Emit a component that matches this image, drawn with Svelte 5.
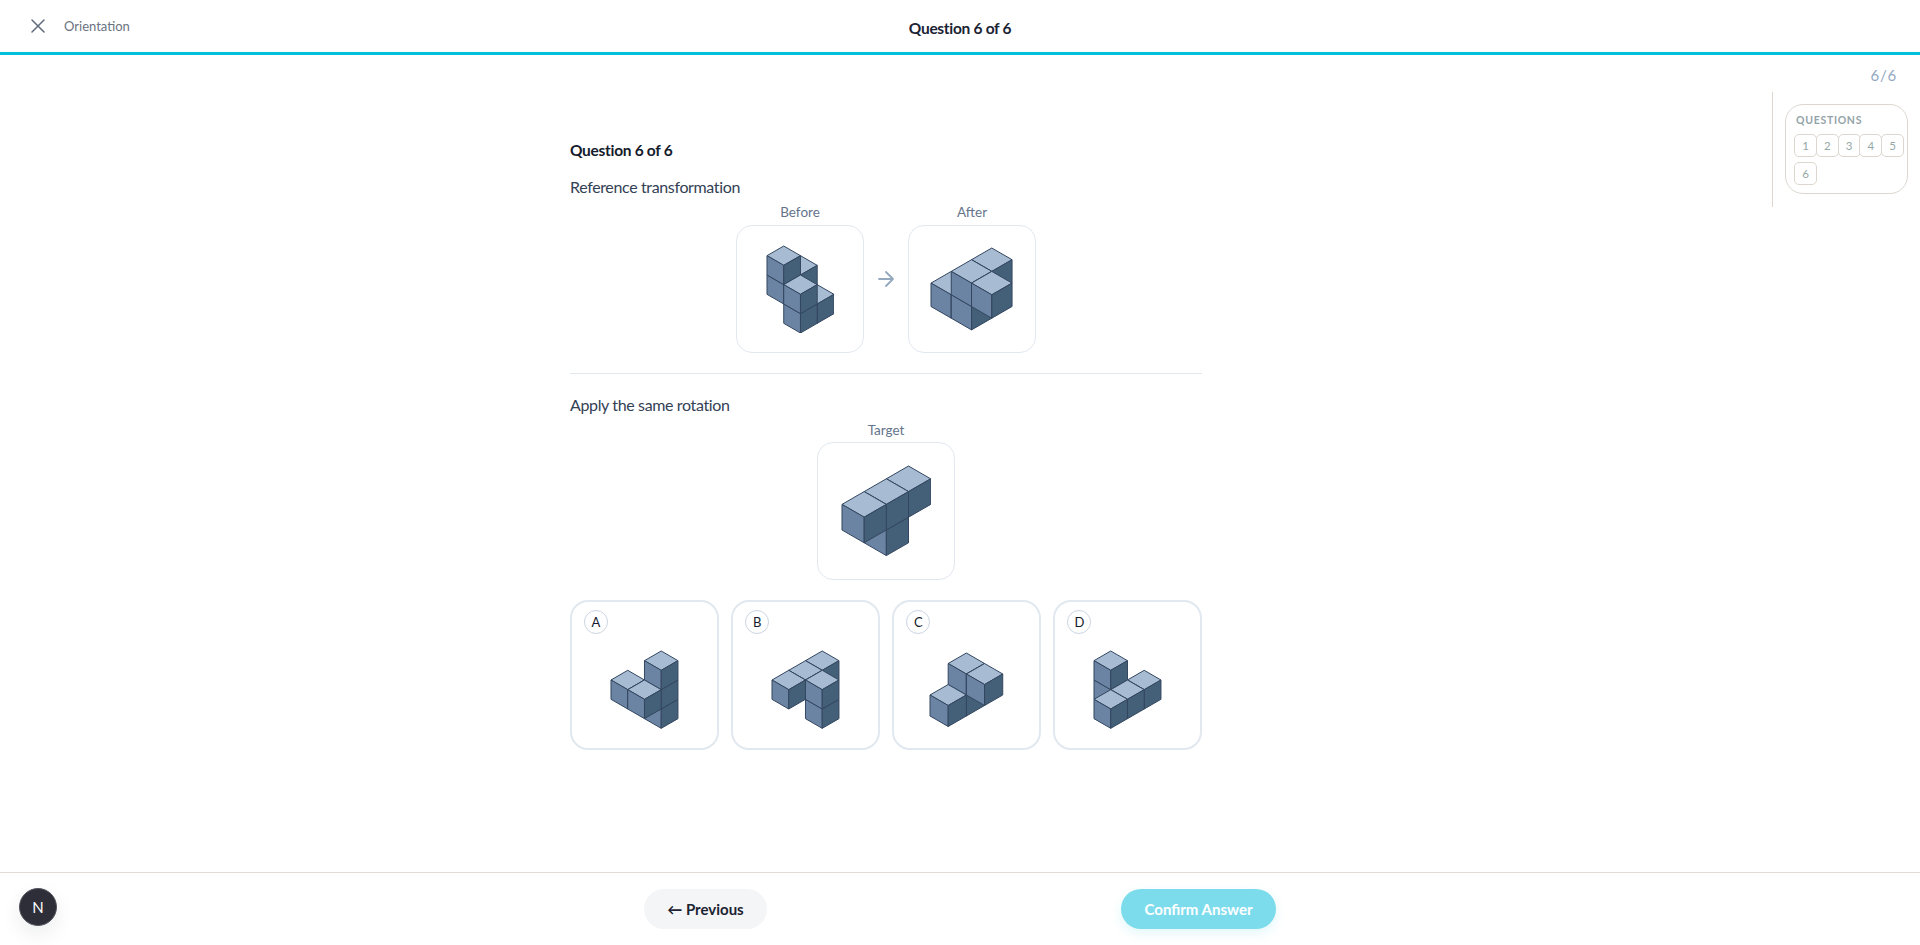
<script>
  function build(vox, s) {
    const dx = s * 0.866, dy = s * 0.5;
    const P = (a, b, c) => [(a - b) * dx, (a + b) * dy - c * s];
    const sorted = [...vox].sort((p, q) => p[0] + p[1] + p[2] - (q[0] + q[1] + q[2]));
    const faces = [];
    for (const [a, b, c] of sorted) {
      faces.push({ k: 'top', pts: [P(a, b, c + 1), P(a + 1, b, c + 1), P(a + 1, b + 1, c + 1), P(a, b + 1, c + 1)] });
      faces.push({ k: 'left', pts: [P(a, b + 1, c + 1), P(a + 1, b + 1, c + 1), P(a + 1, b + 1, c), P(a, b + 1, c)] });
      faces.push({ k: 'right', pts: [P(a + 1, b, c + 1), P(a + 1, b + 1, c + 1), P(a + 1, b + 1, c), P(a + 1, b, c)] });
    }
    const all = faces.flatMap((f) => f.pts);
    const minX = Math.min(...all.map((p) => p[0])), maxX = Math.max(...all.map((p) => p[0]));
    const minY = Math.min(...all.map((p) => p[1])), maxY = Math.max(...all.map((p) => p[1]));
    const w = maxX - minX + 2, h = maxY - minY + 2;
    return {
      w, h,
      vb: `${minX - 1} ${minY - 1} ${w} ${h}`,
      faces: faces.map((f) => ({ k: f.k, d: f.pts.map((p) => p.map((n) => n.toFixed(2)).join(',')).join(' ') }))
    };
  }

  const before = build([[0,0,0],[0,0,-1],[0,-1,-1],[1,0,-1],[1,0,-2],[1,-1,-2]], 19.33);
  const after = build([[0,0,0],[0,-1,0],[1,0,0],[-1,0,-1],[0,0,-1]], 23.4);
  const target = build([[0,0,0],[0,-1,0],[0,-2,0],[0,-1,-1]], 25.6);
  const options = [
    { id: 'A', fig: build([[0,0,0],[0,0,-1],[0,0,-2],[0,1,-1],[-1,1,-1]], 19.33) },
    { id: 'B', fig: build([[0,0,0],[0,1,0],[0,2,0],[1,1,0],[1,1,-1]], 19.33) },
    { id: 'C', fig: build([[0,0,0],[1,0,0],[0,1,-1],[0,0,-1]], 21) },
    { id: 'D', fig: build([[0,0,0],[0,0,-1],[1,-1,-1],[1,0,-1],[1,1,-1]], 19.33) }
  ];
  const nums = [1, 2, 3, 4, 5, 6];
</script>

{#snippet cube(fig)}
  <svg width={fig.w} height={fig.h} viewBox={fig.vb} class="cube">
    {#each fig.faces as f}
      <polygon points={f.d} class={f.k} />
    {/each}
  </svg>
{/snippet}

<div class="page">
  <header class="top">
    <div class="left">
      <svg class="x" width="24" height="24" viewBox="0 0 24 24" fill="none" stroke="currentColor" stroke-width="1.5" stroke-linecap="round"><path d="M18 6 6 18M6 6l12 12" /></svg>
      <span class="crumb">Orientation</span>
    </div>
    <div class="title">Question 6 of 6</div>
    <div></div>
  </header>

  <div class="middle">
    <main class="center">
      <div class="column">
        <h1>Question 6 of 6</h1>
        <h2>Reference transformation</h2>
        <div class="pair">
          <div class="fig">
            <span class="label">Before</span>
            <div class="box small">{@render cube(before)}</div>
          </div>
          <svg class="arrow" width="24" height="24" viewBox="0 0 24 24" fill="none" stroke="currentColor" stroke-width="1.8" stroke-linecap="round" stroke-linejoin="round"><path d="M5 12h14M12 5l7 7-7 7" /></svg>
          <div class="fig">
            <span class="label">After</span>
            <div class="box small">{@render cube(after)}</div>
          </div>
        </div>
        <hr />
        <h2 class="apply">Apply the same rotation</h2>
        <div class="fig solo">
          <span class="label">Target</span>
          <div class="box large">{@render cube(target)}</div>
        </div>
        <div class="options">
          {#each options as o}
            <button class="option">
              <span class="badge">{o.id}</span>
              {@render cube(o.fig)}
            </button>
          {/each}
        </div>
      </div>
    </main>
    <aside class="side">
      <div class="count">6/6</div>
      <div class="rail">
        <div class="card">
          <div class="qhead">QUESTIONS</div>
          <div class="grid">
            {#each nums as n}
              <button class="num">{n}</button>
            {/each}
          </div>
        </div>
      </div>
    </aside>
  </div>

  <footer class="bottom">
    <div class="actions">
      <button class="prev">← Previous</button>
      <button class="confirm">Confirm Answer</button>
    </div>
  </footer>
  <div class="dev">N</div>
</div>

<style>
  :global(body) { margin: 0; background: #fff; }
  .page {
    position: relative;
    height: 945px;
    display: flex;
    flex-direction: column;
    font-family: Lato, "Noto Sans", sans-serif;
    color: #1b2333;
    overflow: hidden;
  }
  .top {
    height: 52px;
    border-bottom: 3px solid #00c1d9;
    display: grid;
    grid-template-columns: 1fr auto 1fr;
    align-items: center;
    padding: 0 26px;
  }
  .left { display: flex; align-items: center; gap: 14px; }
  .x { color: #5f6b7d; display: block; }
  .crumb { font-size: 13px; color: #6b7280; }
  .title { font-size: 15.5px; font-weight: 700; letter-spacing: -0.3px; padding-top: 4px; color: #1b2333; }
  .middle { flex: 1; display: flex; min-height: 0; }
  .center { flex: 1; display: flex; justify-content: center; }
  .column { width: 632px; padding-top: 85px; display: flex; flex-direction: column; }
  h1 { margin: 0; font-size: 15.5px; line-height: 20px; font-weight: 700; letter-spacing: -0.3px; color: #141b2b; }
  h2 { margin: 16px 0 0; font-size: 16px; line-height: 22px; font-weight: 400; letter-spacing: -0.36px; color: #334155; }
  h2.apply { margin-top: 20px; }
  .pair { margin-top: 5px; display: flex; justify-content: center; align-items: center; gap: 10px; }
  .arrow { color: #94a8bf; display: block; margin-top: 2px; }
  .fig { display: flex; flex-direction: column; align-items: center; gap: 4px; }
  .fig.solo { margin-top: 5px; gap: 3px; }
  .label { font-size: 13.5px; line-height: 18px; color: #64748b; }
  .box {
    border: 1px solid #e2e8f0;
    border-radius: 16px;
    display: flex;
    align-items: center;
    justify-content: center;
    box-sizing: border-box;
  }
  .small { width: 128px; height: 128px; }
  .large { width: 138px; height: 138px; }
  hr { margin: 20px 0 0; border: 0; border-top: 1px solid #e2e8f0; width: 100%; }
  .options { margin-top: 20px; display: grid; grid-template-columns: repeat(4, 1fr); gap: 12.5px; }
  .option {
    position: relative;
    height: 150px;
    box-sizing: border-box;
    padding: 30px 0 0;
    background: #fff;
    border: 2px solid #e2e8f0;
    border-radius: 18px;
    display: flex;
    align-items: center;
    justify-content: center;
    font: inherit;
  }
  .badge {
    position: absolute;
    left: 12px;
    top: 8px;
    width: 24px;
    height: 24px;
    box-sizing: border-box;
    border: 1px solid #cbd5e1;
    border-radius: 50%;
    display: flex;
    align-items: center;
    justify-content: center;
    font-size: 13px;
    color: #141b2b;
  }
  .cube { display: block; }
  .cube polygon { stroke: #33465f; stroke-width: 1; stroke-linejoin: round; }
  .cube .top { fill: #a7bcd2; }
  .cube .left { fill: #6c84a4; }
  .cube .right { fill: #445f78; }
  .side { width: 148px; padding-top: 10px; box-sizing: border-box; }
  .count { height: 20px; line-height: 20px; text-align: right; padding-right: 23px; font-size: 15px; letter-spacing: 0.8px; color: #94a8bf; }
  .rail {
    margin-top: 7px;
    height: 115px;
    box-sizing: border-box;
    border-left: 1px solid #dcd8d0;
    padding: 12px 12px 0 12px;
  }
  .card {
    height: 90px;
    box-sizing: border-box;
    border: 1px solid #dcd8d0;
    border-radius: 18px;
    padding: 8px 8px 0 8px;
  }
  .qhead { font-size: 10.5px; line-height: 14px; letter-spacing: 0.7px; color: #94a3a8; padding-left: 2px; font-weight: 700; }
  .grid { margin-top: 7px; display: grid; grid-template-columns: repeat(5, 21.75px); row-gap: 5px; }
  .num {
    width: 23px;
    height: 23px;
    padding: 0;
    background: #fff;
    border: 1px solid #dcd8d0;
    border-radius: 5px;
    font: inherit;
    font-size: 11.5px;
    color: #94a8a8;
  }
  .bottom {
    height: 73px;
    box-sizing: border-box;
    border-top: 1px solid #e0dcd4;
    padding-top: 16px;
    display: flex;
    justify-content: center;
  }
  .actions { width: 632px; display: flex; justify-content: space-between; align-items: flex-start; }
  .prev, .confirm { height: 40px; border: 0; border-radius: 20px; font: inherit; font-size: 15px; font-weight: 700; }
  .prev { width: 123px; background: #f4f5f7; color: #1b2333; }
  .confirm { width: 155px; background: #7ddcec; color: #fff; box-shadow: 0 4px 12px rgba(0, 193, 217, 0.12); }
  .dev {
    position: absolute;
    left: 19px;
    top: 888px;
    width: 38px;
    height: 38px;
    box-sizing: border-box;
    border: 1px solid #55555f;
    border-radius: 50%;
    background: #2e2e38;
    color: #fff;
    display: flex;
    align-items: center;
    justify-content: center;
    font-size: 15px;
    font-weight: 400;
    box-shadow: 0 8px 20px rgba(15, 23, 42, 0.08);
  }
</style>
